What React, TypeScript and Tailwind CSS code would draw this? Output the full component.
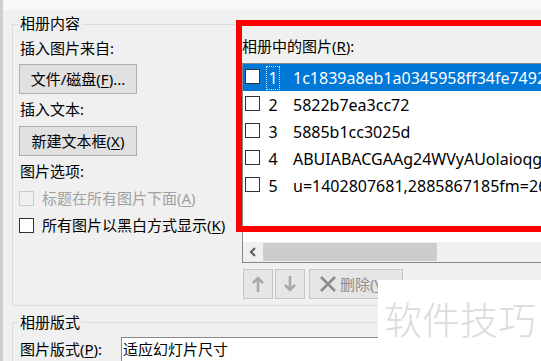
import clsx from "clsx";

type PicItem = {
  no: number;
  name: string;
};

const pics: PicItem[] = [
  { no: 1, name: "1c1839a8eb1a0345958ff34fe7492b1e.jpg" },
  { no: 2, name: "5822b7ea3cc72" },
  { no: 3, name: "5885b1cc3025d" },
  { no: 4, name: "ABUIABACGAAg24WVyAUolaioqgQ.jpg" },
  { no: 5, name: "u=1402807681,2885867185fm=26&gp=0.jpg" },
];

function Key({ k }: { k: string }) {
  return <span className="underline underline-offset-2">{k}</span>;
}

function CheckBox({ disabled }: { disabled?: boolean }) {
  return (
    <span
      className={clsx(
        "inline-block h-[15px] w-[15px] shrink-0 border",
        disabled ? "border-[#cccccc] bg-[#f0f0f0]" : "border-[#333333] bg-white"
      )}
    />
  );
}

function PictureList() {
  return (
    <div className="mt-[7px] flex h-[200px] flex-col border border-[#828790] bg-white">
      {pics.map((pic, i) => (
        <div
          key={pic.no}
          className={clsx(
            "flex h-[27px] items-center",
            i === 0 ? "bg-[#0078d7] text-white" : "text-black"
          )}
        >
          <span className="ml-[2px]">
            <CheckBox />
          </span>
          <span
            className={clsx(
              "ml-[6px] flex h-[24px] w-[14px] items-center justify-center text-[16px]",
              i === 0 ? "border border-dotted border-[#dde8f5]" : "border border-transparent"
            )}
          >
            {pic.no}
          </span>
          <span className="ml-[13px] whitespace-nowrap text-[16px]">{pic.name}</span>
        </div>
      ))}
      <div className="flex-1" />
      <div className="flex h-[20px] items-center bg-[#f0f0f0]">
        <div className="flex h-full w-[20px] items-center justify-center">
          <svg width="8" height="10" viewBox="0 0 8 10">
            <path d="M6 1L2 5l4 4" fill="none" stroke="#5a5a5a" strokeWidth="2" />
          </svg>
        </div>
        <div className="h-[18px] w-[174px] bg-[#cdcdcd]" />
      </div>
    </div>
  );
}

function ToolButtons() {
  return (
    <div className="mt-[6px] flex">
      <button
        type="button"
        className="ml-[1px] flex h-[30px] w-[30px] items-center justify-center border border-[#c6c6c6] bg-[#e6e6e6]"
      >
        <svg width="14" height="18" viewBox="0 0 14 18">
          <path d="M7 17V3M2 8l5-5 5 5" fill="none" stroke="#a8a8a8" strokeWidth="2.6" />
        </svg>
      </button>
      <button
        type="button"
        className="ml-[2px] flex h-[30px] w-[30px] items-center justify-center border border-[#c6c6c6] bg-[#e6e6e6]"
      >
        <svg width="14" height="18" viewBox="0 0 14 18">
          <path d="M7 1v14M2 10l5 5 5-5" fill="none" stroke="#a8a8a8" strokeWidth="2.6" />
        </svg>
      </button>
      <button
        type="button"
        className="ml-[4px] flex h-[30px] w-[94px] items-center border border-[#c6c6c6] bg-[#e6e6e6] pl-[9px] text-[#8c8c8c]"
      >
        <svg width="18" height="18" viewBox="0 0 18 18">
          <path d="M2 2l14 14M16 2L2 16" fill="none" stroke="#8c8c8c" strokeWidth="2.6" />
        </svg>
        <span className="ml-[3px] whitespace-nowrap">
          删除(<Key k="V" />)
        </span>
      </button>
    </div>
  );
}

export default function App() {
  return (
    <div className="relative h-[361px] w-[541px] overflow-hidden border-l-[3px] border-[#cfcfcf] bg-[#f0f0f0] font-['Noto_Sans','Noto_Sans_CJK_SC',sans-serif] text-[15px] leading-[20px] text-black">
      <div className="h-[10px] bg-[#f8f8f8]" />

      {/* 相册内容 */}
      <section className="relative ml-[9px] mt-[14px] flex h-[282px] w-[600px] border border-[#dcdcdc]">
        <span className="absolute -top-[12px] left-[5px] bg-[#f0f0f0] px-[2px]">相册内容</span>

        <div className="flex w-[229px] shrink-0 flex-col pl-[6px]">
          <p className="mt-[13px] pl-[1px]">插入图片来自:</p>
          <button
            type="button"
            className="mt-[6px] h-[30px] w-[118px] border border-[#adadad] bg-[#e1e1e1]"
          >
            文件/磁盘(<Key k="F" />)...
          </button>
          <p className="mt-[5px] pl-[1px]">插入文本:</p>
          <button
            type="button"
            className="mt-[7px] h-[30px] w-[118px] border border-[#adadad] bg-[#e1e1e1]"
          >
            新建文本框(<Key k="X" />)
          </button>
          <p className="mt-[5px] pl-[1px]">图片选项:</p>
          <label className="mt-[7px] flex items-center gap-[8px] text-[#a0a0a0]">
            <CheckBox disabled />
            <span className="whitespace-nowrap">
              标题在所有图片下面(<Key k="A" />)
            </span>
          </label>
          <label className="mt-[7px] flex items-center gap-[8px]">
            <CheckBox />
            <span className="whitespace-nowrap">
              所有图片以黑白方式显示(<Key k="K" />)
            </span>
          </label>
        </div>

        <div className="flex flex-1 flex-col">
          <p className="mt-[11px] whitespace-nowrap">
            相册中的图片(<Key k="R" />):
          </p>
          <PictureList />
          <ToolButtons />
        </div>
      </section>

      {/* 相册版式 */}
      <section className="relative ml-[9px] mt-[16px] flex h-[100px] w-[600px] items-start border border-[#dcdcdc] pl-[7px]">
        <span className="absolute -top-[11px] left-[5px] bg-[#f0f0f0] px-[2px]">相册版式</span>
        <p className="mt-[16px] w-[101px] shrink-0 whitespace-nowrap">
          图片版式(<Key k="P" />):
        </p>
        <div className="mt-[14px] h-[40px] flex-1 border border-[#8a8a8a] bg-white pl-[1px] pt-[1px]">
          适应幻灯片尺寸
        </div>
      </section>

      {/* red annotation frame */}
      <div className="absolute left-[233px] top-[20px] h-[212px] w-[330px] border-[6px] border-[#ff0000]" />

      {/* watermark */}
      <div className="absolute bottom-0 left-[375px] right-0 top-[280px] bg-white pl-[6px] pt-[19px] font-['Noto_Sans_CJK_SC',sans-serif] text-[38px] font-light leading-[38px] whitespace-nowrap text-[#dcdcdc]">
        软件技巧
      </div>
    </div>
  );
}
